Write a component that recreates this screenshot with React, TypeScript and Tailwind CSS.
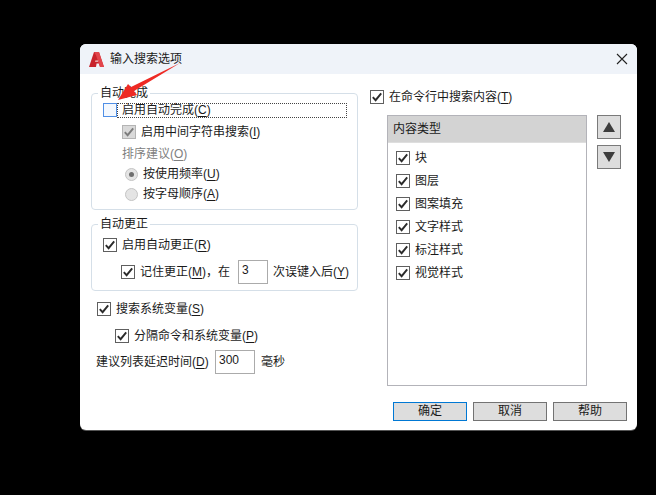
import type { ReactNode } from "react";

function Check({ dim = false, className = "" }: { dim?: boolean; className?: string }) {
  return (
    <span
      className={`flex h-[14px] w-[14px] shrink-0 items-center justify-center border ${
        dim ? "border-[#b4b4b4] bg-[#d9d9d9]" : "border-[#5f5f5f] bg-white"
      } ${className}`}
    >
      <svg width="12" height="12" viewBox="0 0 12 12" fill="none">
        <path
          d="M1.8 6.2 4.6 9.2 10.2 2.4"
          stroke={dim ? "#7c7c7c" : "#2b2b2b"}
          strokeWidth="1.9"
        />
      </svg>
    </span>
  );
}

function Radio({ on = false }: { on?: boolean }) {
  return (
    <span className="flex h-[13px] w-[13px] shrink-0 items-center justify-center rounded-full border border-[#c4c4c4] bg-[#e4e4e4]">
      {on && <span className="h-[5px] w-[5px] rounded-full bg-[#6f6f6f]" />}
    </span>
  );
}

function Key({ c }: { c: string }) {
  return (
    <>
      (<span className="underline underline-offset-2">{c}</span>)
    </>
  );
}

function Field({ value, className }: { value: string; className: string }) {
  return (
    <span className={`block shrink-0 border border-[#ababab] bg-white pt-[1px] leading-[16px] ${className}`}>
      {value}
    </span>
  );
}

function Group({ title, className, children }: { title: string; className: string; children: ReactNode }) {
  return (
    <fieldset className={`rounded-[4px] border border-[#d5dfe8] ${className}`}>
      <legend className="-ml-[5px] px-[2px] leading-[14px]">{title}</legend>
      {children}
    </fieldset>
  );
}

function Btn({ label, focus = false }: { label: string; focus?: boolean }) {
  return (
    <button
      className={`h-[19px] w-[74px] border bg-[#dddddd] text-[12px] leading-[15px] ${
        focus ? "border-[#0078d4]" : "border-[#737373]"
      }`}
    >
      {label}
    </button>
  );
}

function Arrow({ d }: { d: string }) {
  return (
    <button className="flex h-[24px] w-[24px] items-center justify-center border border-[#7a7a7a] bg-[#dddddd]">
      <svg width="12" height="10" viewBox="0 0 12 10">
        <path d={d} fill="#3d3d3d" />
      </svg>
    </button>
  );
}

const types = ["块", "图层", "图案填充", "文字样式", "标注样式", "视觉样式"];

export default function App() {
  return (
    <div
      className="relative h-[495px] w-[656px] overflow-hidden bg-black pl-[80px] pt-[44px] text-[12px] text-[#1a1a1a]"
      style={{ fontFamily: '"Liberation Sans", "Noto Sans CJK SC", sans-serif' }}
    >
      <div className="h-[386px] w-[557px] overflow-hidden rounded-[6px] bg-white shadow-[0_1px_0_#555]">
        <div className="flex h-[30px] items-center bg-[#eff3f9] pl-[9px] pr-[9px]">
          <svg width="15" height="15" viewBox="0 0 15 15">
            <path d="M0 15 5 0h5l5 15h-4l-1-3.6H7.6L7 15z" fill="#c8232c" />
            <path d="M5 0h5l5 15h-4L7 3.2z" fill="#e2454c" />
            <path d="M6.4 8.4h3l-.4 1.4H6z" fill="#f4d4d4" />
          </svg>
          <span className="ml-[6px] text-[12px]">输入搜索选项</span>
          <svg className="ml-auto" width="12" height="12" viewBox="0 0 12 12" stroke="#222" strokeWidth="1.1">
            <path d="M1 1l10 10M11 1 1 11" />
          </svg>
        </div>

        <div className="flex">
          <div className="ml-[11px] mt-[12px] w-[267px]">
            <Group title="自动完成" className="h-[124px] pl-[11px]">
              <div className="mt-[2px] flex h-[16px] items-center">
                <span className="h-[14px] w-[14px] shrink-0 border border-[#4f8fe6] bg-[#f3f8fe]" />
                <span className="flex h-[15px] w-[230px] items-center border border-dotted border-[#444] pl-[4px]">
                  启用自动完成
                  <Key c="C" />
                </span>
              </div>
              <div className="ml-[19px] mt-[7px] flex h-[14px] items-center gap-[5px]">
                <Check dim />
                <span>
                  启用中间字符串搜索
                  <Key c="I" />
                </span>
              </div>
              <div className="ml-[19px] mt-[7px] h-[16px] leading-[16px] text-[#808080]">
                排序建议
                <Key c="O" />
              </div>
              <div className="ml-[22px] mt-[4px] flex h-[16px] items-center gap-[5px]">
                <Radio on />
                <span>
                  按使用频率
                  <Key c="U" />
                </span>
              </div>
              <div className="ml-[22px] mt-[4px] flex h-[16px] items-center gap-[5px]">
                <Radio />
                <span>
                  按字母顺序
                  <Key c="A" />
                </span>
              </div>
            </Group>

            <Group title="自动更正" className="mt-[7px] h-[74px] pl-[11px]">
              <div className="mt-[7px] flex h-[14px] items-center gap-[5px]">
                <Check />
                <span>
                  启用自动更正
                  <Key c="R" />
                </span>
              </div>
              <div className="ml-[18px] mt-[8px] flex items-center">
                <Check />
                <span className="ml-[5px]">
                  记住更正
                  <Key c="M" />
                  ，在
                </span>
                <Field value="3" className="ml-[8px] h-[24px] w-[30px] pl-[3px]" />
                <span className="ml-[5px]">
                  次误键入后
                  <Key c="Y" />
                </span>
              </div>
            </Group>

            <div className="ml-[6px] mt-[11px] flex h-[14px] items-center gap-[5px]">
              <Check />
              <span>
                搜索系统变量
                <Key c="S" />
              </span>
            </div>
            <div className="ml-[24px] mt-[13px] flex h-[14px] items-center gap-[5px]">
              <Check />
              <span>
                分隔命令和系统变量
                <Key c="P" />
              </span>
            </div>
            <div className="ml-[5px] mt-[7px] flex items-center">
              <span className="w-[114px]">
                建议列表延迟时间
                <Key c="D" />
              </span>
              <Field value="300" className="ml-[5px] h-[24px] w-[40px] pl-[3px]" />
              <span className="ml-[6px]">毫秒</span>
            </div>
          </div>

          <div className="ml-[12px] mt-[16px] w-[257px]">
            <div className="flex h-[14px] items-center gap-[5px]">
              <Check />
              <span>
                在命令行中搜索内容
                <Key c="T" />
              </span>
            </div>
            <div className="mt-[11px] flex">
              <div className="ml-[17px] h-[271px] w-[200px] border border-[#b3b3b9]">
                <div className="flex h-[27px] items-center border-b border-[#dedede] bg-[#d3d3d3] pl-[5px]">内容类型</div>
                <div className="flex flex-col gap-[9px] pl-[8px] pt-[8px]">
                  {types.map((t) => (
                    <div key={t} className="flex h-[14px] items-center gap-[5px]">
                      <Check />
                      <span>{t}</span>
                    </div>
                  ))}
                </div>
              </div>
              <div className="ml-[10px] flex flex-col gap-[6px]">
                <Arrow d="M6 0l6 10H0z" />
                <Arrow d="M6 10 0 0h12z" />
              </div>
            </div>
          </div>
        </div>

        <div className="mr-[10px] mt-[16px] flex justify-end gap-[6px]">
          <Btn label="确定" focus />
          <Btn label="取消" />
          <Btn label="帮助" />
        </div>
      </div>

      <svg className="absolute left-0 top-0" width="656" height="495" viewBox="0 0 656 495">
        <path d="M118 100 128 84 131 87 180 63 134 91 137 95z" fill="#ee2a24" />
      </svg>
    </div>
  );
}
